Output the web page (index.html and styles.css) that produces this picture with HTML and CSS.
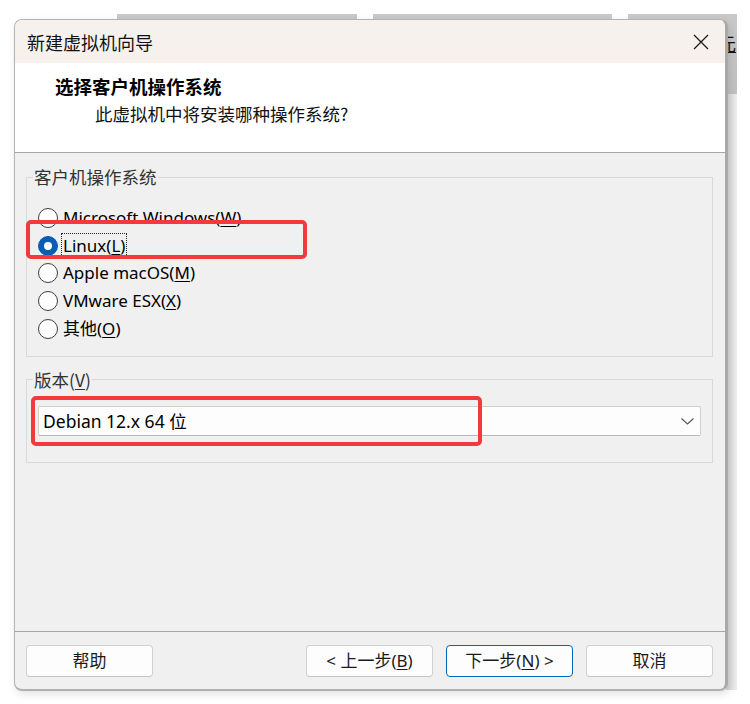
FILE: index.html
```html
<!DOCTYPE html>
<html lang="zh-CN">
<head>
<meta charset="utf-8">
<title>新建虚拟机向导</title>
<link rel="stylesheet" href="styles.css">
</head>
<body>
<div class="desktop">
  <div class="bg-win bg-win-1"></div>
  <div class="bg-win bg-win-2"></div>
  <div class="bg-win bg-win-3"><span class="bg-text">元</span></div>
  <div class="bg-shade"></div>

  <div class="dialog">
    <div class="titlebar">
      <span class="title">新建虚拟机向导</span>
      <svg class="close" width="16" height="16" viewBox="0 0 16 16"><path d="M1 1 L15 15 M15 1 L1 15" stroke="#1a1a1a" stroke-width="1.3" fill="none"/></svg>
    </div>
    <div class="header">
      <div class="h-title">选择客户机操作系统</div>
      <div class="h-sub">此虚拟机中将安装哪种操作系统?</div>
    </div>
    <div class="body">
      <fieldset class="group group-os">
        <legend>客户机操作系统</legend>
        <div class="radio-row"><span class="radio"></span><span class="label">Microsoft Windows(<u>W</u>)</span></div>
        <div class="radio-row"><span class="radio checked"></span><span class="label focus">Linux(<u>L</u>)</span></div>
        <div class="radio-row"><span class="radio"></span><span class="label">Apple macOS(<u>M</u>)</span></div>
        <div class="radio-row"><span class="radio"></span><span class="label">VMware ESX(<u>X</u>)</span></div>
        <div class="radio-row"><span class="radio"></span><span class="label">其他(<u>O</u>)</span></div>
      </fieldset>
      <fieldset class="group group-ver">
        <legend>版本(<u>V</u>)</legend>
        <div class="combo">
          <span class="combo-text">Debian 12.x 64 位</span>
          <svg class="chev" width="13" height="7" viewBox="0 0 13 7"><path d="M0.5 0.5 L6.5 6 L12.5 0.5" stroke="#555" stroke-width="1.1" fill="none"/></svg>
        </div>
      </fieldset>
    </div>
    <div class="footer">
      <button class="btn">帮助</button>
      <div class="btn-group">
        <button class="btn">&lt; 上一步(<u>B</u>)</button>
        <button class="btn primary">下一步(<u>N</u>) &gt;</button>
        <button class="btn">取消</button>
      </div>
    </div>
  </div>

  <div class="mark mark-1"></div>
  <div class="mark mark-2"></div>
</div>
</body>
</html>
```
FILE: styles.css
```css
html, body {
  margin: 0;
  padding: 0;
  background: #ffffff;
}
body {
  font-family: "Noto Sans", "Noto Sans CJK SC", sans-serif;
  color: #000;
}
.desktop {
  position: relative;
  width: 750px;
  height: 704px;
  overflow: hidden;
  padding-top: 19px;
  box-sizing: border-box;
}
.bg-win {
  position: absolute;
  top: 14px;
  height: 80px;
  background: linear-gradient(#c9c9c9, #c2c2c2);
}
.bg-win-1 { left: 117px; width: 240px; }
.bg-win-2 { left: 373px; width: 239px; }
.bg-win-3 { left: 628px; width: 109px; }
.bg-text {
  position: absolute;
  left: 90px;
  top: 18px;
  font-family: "Noto Sans CJK SC", sans-serif;
  font-size: 18px;
  line-height: 22px;
  text-decoration: underline;
  color: #111;
}
.bg-shade {
  position: absolute;
  left: 726px;
  top: 94px;
  width: 11px;
  height: 596px;
  background: linear-gradient(90deg, #d4d4d4, #efefef);
}
.dialog {
  position: relative;
  z-index: 1;
  margin-left: 14px;
  width: 714px;
  height: 672px;
  box-sizing: border-box;
  border: 1px solid #b4b4b4;
  border-right: 3px solid #a9a9a9;
  border-bottom: 2px solid #b0b0b0;
  border-radius: 8px;
  overflow: hidden;
  background: #f0f0f0;
  display: flex;
  flex-direction: column;
  box-shadow: 2px 3px 8px rgba(0,0,0,0.12);
}
.titlebar {
  height: 43px;
  flex: none;
  background: #f7f1ed;
  display: flex;
  align-items: center;
  justify-content: space-between;
  padding: 0 16px 0 12px;
}
.title {
  font-family: "Noto Sans CJK SC", sans-serif;
  font-size: 18px;
  color: #111;
  line-height: 24px;
}
.close {
  margin-top: 1px;
}
.header {
  flex: none;
  background: #fff;
  border-bottom: 1px solid #a6a6a6;
  padding-top: 10px;
  box-sizing: content-box;
  height: 79px;
}
.h-title {
  padding-left: 40px;
  font-family: "Noto Sans CJK SC", sans-serif;
  font-weight: 700;
  font-size: 18.5px;
  line-height: 26px;
}
.h-sub {
  padding-left: 80px;
  margin-top: 2px;
  font-family: "Noto Sans CJK SC", sans-serif;
  font-size: 17.5px;
  line-height: 26px;
  color: #111;
}
.body {
  flex: 1;
  padding: 12px 12px 0 11px;
}
.group {
  margin: 0;
  border: 1px solid #d9d9d9;
  padding: 0 11px;
}
.group legend {
  padding: 0 1px;
  margin-left: -5px;
  font-family: "Noto Sans CJK SC", sans-serif;
  font-size: 17.5px;
  line-height: 24px;
  color: #333;
}
.group legend u { text-underline-offset: 2px; }
.group-os {
  padding-top: 15px;
  padding-bottom: 13px;
}
.radio-row {
  height: 27.75px;
  display: flex;
  align-items: center;
}
.radio {
  width: 20px;
  height: 20px;
  box-sizing: border-box;
  border: 1px solid #3d3d3d;
  border-radius: 50%;
  background: #fdfdfd;
  flex: none;
  position: relative;
}
.radio.checked {
  background: #0a5cb5;
  border-color: #0a5cb5;
}
.radio.checked::after {
  content: "";
  position: absolute;
  left: 5px;
  top: 5px;
  width: 8px;
  height: 8px;
  border-radius: 50%;
  background: #fff;
}
.label {
  margin-left: 5px;
  font-size: 17px;
  line-height: 22px;
}
.label u { text-underline-offset: 2px; }
.label.focus {
  outline: 1px dotted #222;
  outline-offset: 1px;
}
.group-ver {
  margin-top: 11px;
  padding-top: 14px;
  padding-bottom: 26px;
}
.combo {
  height: 30px;
  box-sizing: border-box;
  border: 1px solid #cfcfcf;
  border-bottom-color: #b8b8b8;
  background: #fdfdfd;
  display: flex;
  align-items: center;
  justify-content: space-between;
  padding: 0 6px 0 4px;
  border-radius: 2px;
}
.combo-text {
  font-size: 17.5px;
  line-height: 22px;
}
.chev { margin-top: 1px; }
.footer {
  height: 58px;
  flex: none;
  border-top: 1px solid #a6a6a6;
  display: flex;
  justify-content: space-between;
  align-items: flex-start;
  padding: 13px 12px 0 11px;
  box-sizing: border-box;
}
.btn-group {
  display: flex;
  gap: 13px;
}
.btn {
  width: 127px;
  height: 32px;
  box-sizing: border-box;
  border: 1px solid #d0d0d0;
  border-bottom-color: #c4c4c4;
  border-radius: 4px;
  background: #fdfdfd;
  font-family: "Noto Sans", "Noto Sans CJK SC", sans-serif;
  font-size: 17px;
  line-height: 22px;
  color: #1a1a1a;
  padding: 0;
}
.btn u { text-underline-offset: 2px; }
.btn.primary {
  border: 1px solid #0067c0;
}
.mark {
  position: absolute;
  z-index: 2;
  border: 4px solid #f23a3e;
  border-radius: 5px;
  box-sizing: border-box;
}
.mark-1 { left: 26px; top: 220px; width: 281px; height: 39px; }
.mark-2 { left: 31px; top: 396px; width: 451px; height: 50px; }
```
